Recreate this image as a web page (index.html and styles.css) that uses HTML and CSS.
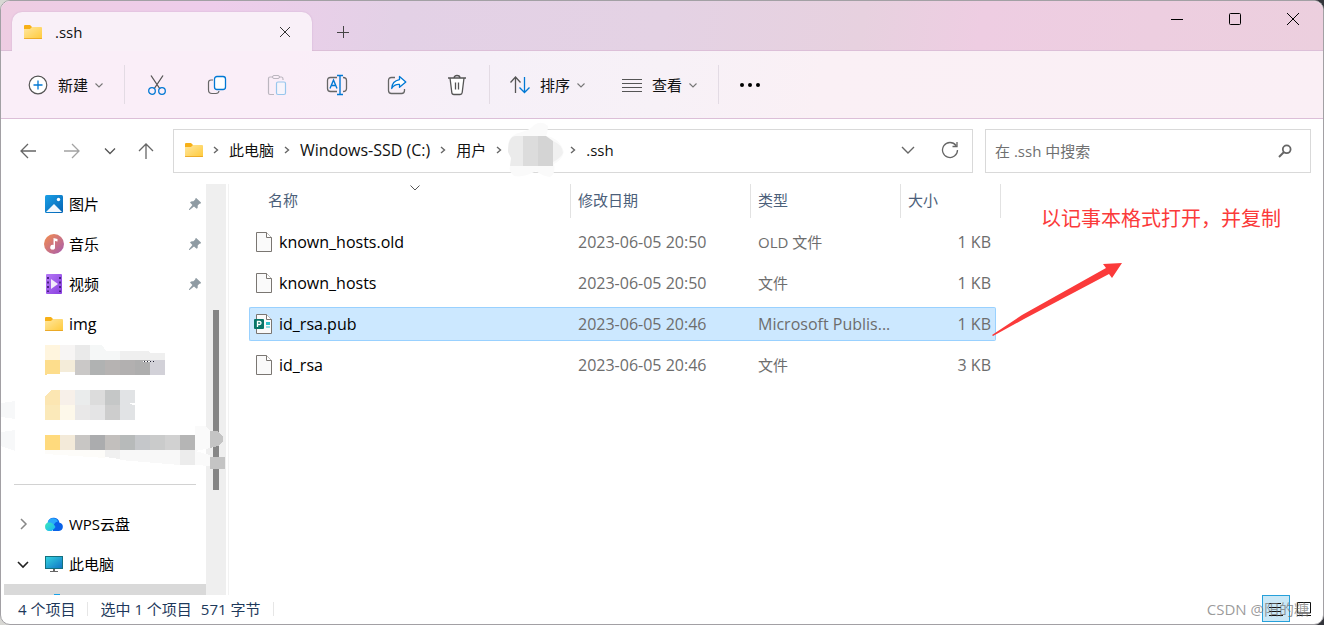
FILE: index.html
```html
<!DOCTYPE html>
<html lang="zh-CN">
<head>
<meta charset="utf-8">
<title>.ssh</title>
<link rel="stylesheet" href="styles.css">
</head>
<body>
<svg class="defs" aria-hidden="true">
  <defs>
    <linearGradient id="gold" x1="0" y1="0" x2="1" y2="1"><stop offset="0" stop-color="#ffe7a0"/><stop offset="1" stop-color="#ffca3a"/></linearGradient>
    <linearGradient id="sky" x1="0" y1="0" x2="1" y2="1"><stop offset="0" stop-color="#1ba0e6"/><stop offset="1" stop-color="#0463b4"/></linearGradient>
    <linearGradient id="sunset" x1="0" y1="0" x2="1" y2="1"><stop offset="0" stop-color="#f58e4c"/><stop offset="1" stop-color="#a65bb0"/></linearGradient>
    <linearGradient id="violet" x1="0" y1="0" x2="1" y2="1"><stop offset="0" stop-color="#b478f5"/><stop offset="1" stop-color="#8a3fe0"/></linearGradient>
    <linearGradient id="screen" x1="0" y1="0" x2="1" y2="1"><stop offset="0" stop-color="#35d6e0"/><stop offset="1" stop-color="#0f72c4"/></linearGradient>
    <linearGradient id="aqua" x1="0" y1="0" x2="1" y2="1"><stop offset="0" stop-color="#3ce8b8"/><stop offset="1" stop-color="#19b4fa"/></linearGradient>
    <symbol id="folder" viewBox="0 0 18 14"><path d="M0 1Q0 0 1 0H6L8 2V5H0Z" fill="#f7b017"/><path d="M0 4H6L8 2H17Q18 2 18 3V13Q18 14 17 14H1Q0 14 0 13Z" fill="url(#gold)"/><path d="M0 13.2H18V14H0Z" fill="#e79f1b"/></symbol>
    <symbol id="down" viewBox="0 0 10 10"><path d="M1.500 3.500L5 7L8.500 3.500" fill="none" stroke="#777" stroke-width="1.100"/></symbol>
    <symbol id="right" viewBox="0 0 8 10"><path d="M2 2L5.5 5L2 8" fill="none" stroke="#666" stroke-width="1.4"/></symbol>
    <symbol id="pin" viewBox="0 0 14 14"><path d="M8.2 1L13 5.6Q13 7 11.4 6.8L9.7 8.5Q10.2 11 8.6 11.8L6 9.6L1.6 13H1V12.2L4.4 8L2 5.4Q3 4 5.4 4.3L7.2 2.6Q7 1 8.2 1Z" fill="#8f9ba3"/></symbol>
    <symbol id="doc" viewBox="0 0 16 20"><path d="M.5 .5H10.5L15.5 5.5V19.5H.5Z" fill="#fafafa" stroke="#7a7672"/><path d="M10.5 .5V5.5H15.5" fill="#fff" stroke="#7a7672"/></symbol>
  </defs>
</svg>

<div class="window">
  <header class="titlebar">
    <div class="tab">
      <svg class="folder"><use href="#folder"/></svg>
      <span class="tab-name">.ssh</span>
      <button class="plain" aria-label="关闭标签页"><svg width="12" height="12"><path d="M1 1L11 11M11 1L1 11" stroke="#333" fill="none"/></svg></button>
    </div>
    <button class="plain new-tab" aria-label="新标签页"><svg width="12" height="12"><path d="M0 6.5H12M6.5 0V12" stroke="#444" fill="none"/></svg></button>
    <div class="controls">
      <button class="plain" aria-label="最小化"><svg width="12" height="12"><path d="M0 6.5H12" stroke="#000"/></svg></button>
      <button class="plain" aria-label="最大化"><svg width="12" height="12"><rect x=".5" y=".5" width="11" height="11" rx="1" fill="none" stroke="#000"/></svg></button>
      <button class="plain" aria-label="关闭"><svg width="12" height="12"><path d="M0 0L12 12M12 0L0 12" stroke="#000" fill="none"/></svg></button>
    </div>
  </header>

  <div class="toolbar">
    <button class="plain tool first"><svg width="20" height="20" fill="none"><circle cx="10" cy="10" r="8.8" stroke="#555" stroke-width="1.2" fill="#fff"/><path d="M10 5.5V14.5M5.5 10H14.5" stroke="#0078d4" stroke-width="1.3"/></svg>新建<svg class="chev"><use href="#down"/></svg></button>
    <span class="rule"></span>
    <button class="plain icon" aria-label="剪切"><svg width="20" height="22" fill="none"><path d="M4 1.5L13 15M16 1.5L7 15" stroke="#555" stroke-width="1.3"/><circle cx="5" cy="17" r="3.3" stroke="#0078d4" stroke-width="1.3"/><circle cx="15" cy="17" r="3.3" stroke="#0078d4" stroke-width="1.3"/></svg></button>
    <button class="plain icon" aria-label="复制"><svg width="20" height="20" fill="none"><path d="M6 5H4Q1.5 5 1.5 7.500V15Q1.500 18.500 5 18.500H9Q11.500 18.500 12 16" stroke="#666" stroke-width="1.2"/><rect x="7.500" y="1.500" width="11" height="13" rx="2.500" fill="#fff" stroke="#0078d4" stroke-width="1.3"/></svg></button>
    <button class="plain icon" aria-label="粘贴"><svg width="20" height="22" fill="none"><path d="M6 3H3Q1.500 3 1.500 4.500V19Q1.500 20.500 3 20.500H7M12 3H14.500Q16 3 16 5V6" stroke="#bbb6bf" stroke-width="1.2"/><rect x="5.500" y="1.500" width="7" height="3" rx="1.500" stroke="#bbb6bf"/><rect x="9.500" y="8" width="9" height="12.500" rx="1.500" fill="#f7f4fb" stroke="#98c6ed" stroke-width="1.2"/></svg></button>
    <button class="plain icon" aria-label="重命名"><svg width="22" height="22" fill="none"><path d="M11 3.500H4.500Q1.500 3.500 1.500 6.500V14.500Q1.500 17.500 4.500 17.500H11M17 3.500Q20.500 3.500 20.500 6.500V14.500Q20.500 17.500 17 17.500" stroke="#666" stroke-width="1.3"/><path d="M14 1.500V20.500M11 1.500H17M11 20.500H17M4 14.500L7.500 6L11 14.500M5.300 11.500H9.700" stroke="#0078d4" stroke-width="1.4"/></svg></button>
    <button class="plain icon" aria-label="共享"><svg width="20" height="20" fill="none"><path d="M8 2.500H4.500Q1.500 2.500 1.500 5.500V15.500Q1.500 18.500 4.500 18.500H14.500Q17.500 18.500 17.500 15.500V14" stroke="#666" stroke-width="1.3"/><path d="M12.500 1.500L18.800 7L12.500 12.300V9.500Q7.500 9 4.700 13.500Q5 6 12.500 4.600Z" fill="#fff" stroke="#0078d4" stroke-width="1.3" stroke-linejoin="round"/></svg></button>
    <button class="plain icon" aria-label="删除"><svg width="20" height="22" fill="none"><path d="M3 4L4.800 18.500Q5 20.500 7 20.500H13Q15 20.500 15.200 18.500L17 4" fill="#fff" stroke="#555" stroke-width="1.3"/><path d="M1 4H19M7 4Q7 1.500 10 1.500T13 4M8.500 8.500V15.500M11.500 8.500V15.500" stroke="#555" stroke-width="1.3"/></svg></button>
    <span class="rule"></span>
    <button class="plain tool"><svg width="20" height="20" fill="none"><path d="M5.500 18V2.500M.500 7.500L5.500 2L10.500 7.500" stroke="#555" stroke-width="1.3"/><path d="M14.500 2V17M9.500 12.500L14.500 17.500L19.500 12.500" stroke="#0078d4" stroke-width="1.3"/></svg>排序<svg class="chev"><use href="#down"/></svg></button>
    <button class="plain tool"><svg width="20" height="20" fill="none"><path d="M0 4.500H20M0 8.500H20M0 12.500H20M0 16.500H20" stroke="#555"/></svg>查看<svg class="chev"><use href="#down"/></svg></button>
    <span class="rule"></span>
    <button class="plain tool" aria-label="更多"><svg width="22" height="6"><circle cx="3" cy="3" r="2"/><circle cx="11" cy="3" r="2"/><circle cx="19" cy="3" r="2"/></svg></button>
  </div>

  <div class="location">
    <div class="history">
      <button class="plain wide" aria-label="后退"><svg width="16" height="16" fill="none"><path d="M16 8H1M8 1L1 8L8 15" stroke="#666" stroke-width="1.3"/></svg></button>
      <button class="plain wide" aria-label="前进"><svg width="16" height="16" fill="none"><path d="M0 8H15M8 1L15 8L8 15" stroke="#a3a3a3" stroke-width="1.3"/></svg></button>
      <button class="plain small" aria-label="最近位置"><svg width="12" height="12" fill="none"><path d="M1 3.500L6 8.500L11 3.500" stroke="#555" stroke-width="1.3"/></svg></button>
      <button class="plain up" aria-label="向上"><svg width="16" height="16" fill="none"><path d="M8 16V1M1 8L8 1L15 8" stroke="#666" stroke-width="1.3"/></svg></button>
    </div>
    <div class="address">
      <svg class="folder"><use href="#folder"/></svg>
      <svg class="sep"><use href="#right"/></svg>
      <a href="#pc">此电脑</a>
      <svg class="sep"><use href="#right"/></svg>
      <a href="#c" class="latin">Windows-SSD (C:)</a>
      <svg class="sep"><use href="#right"/></svg>
      <a href="#users">用户</a>
      <svg class="sep"><use href="#right"/></svg>
      <svg class="masked" width="56" height="56" aria-hidden="true"><path d="M0 22Q2 12 14 10Q22 8 26 3Q34-2 40 4Q40 10 38 14Q52 16 56 30Q54 38 46 42Q48 52 42 55Q34 54 28 49Q16 56 6 54Q-1 48 3 42Q6 34 0 30Z" fill="#fafafa"/><path d="M0 30Q0 14 8 14H15V44H2L3 36Z" fill="#ebebeb"/><path d="M15 14H30V44H15Z" fill="#dcdcdc"/><path d="M30 14H38L45 19V44H30Z" fill="#d4d4d4"/><path d="M45 19Q55 23 55 31Q53 36 45 40Z" fill="#f0f0f0"/></svg>
      <svg class="sep"><use href="#right"/></svg>
      <a href="#ssh">.ssh</a>
      <span class="address-end">
        <button class="plain" aria-label="展开地址"><svg width="14" height="14" fill="none"><path d="M1 4L7 10L13 4" stroke="#666" stroke-width="1.4"/></svg></button>
        <button class="plain" aria-label="刷新"><svg width="18" height="18" fill="none"><path d="M15 4.500A7.500 7.500 0 1 0 16.500 9M16 1V5.500H11.500" stroke="#666" stroke-width="1.3"/></svg></button>
      </span>
    </div>
    <label class="search">
      <input type="text" placeholder="在 .ssh 中搜索" aria-label="搜索">
      <svg width="14" height="14" fill="none"><circle cx="8.700" cy="5.300" r="3.900" stroke="#666" stroke-width="1.800"/><path d="M6 8L1 13" stroke="#666" stroke-width="2"/></svg>
    </label>
  </div>

  <div class="content">
    <aside class="pane">
      <nav class="tree">
        <a href="#pictures" class="node"><span class="glyph"><svg width="18" height="18"><rect width="18" height="18" rx="1.500" fill="url(#sky)"/><path d="M1 17L9 9L17 17Z" fill="#f2f8fd"/><circle cx="13.500" cy="4.500" r="1.700" fill="#fff"/></svg></span>图片<svg class="pin"><use href="#pin"/></svg></a>
        <a href="#music" class="node"><span class="glyph"><svg width="20" height="20"><circle cx="10" cy="10" r="10" fill="url(#sunset)"/><path d="M9.500 4L13.500 5V7.500L11 7V13A2.400 2.400 0 1 1 9.500 11Z" fill="#fff"/></svg></span>音乐<svg class="pin"><use href="#pin"/></svg></a>
        <a href="#videos" class="node"><span class="glyph"><svg width="16" height="20"><rect width="16" height="20" rx="1" fill="url(#violet)"/><path d="M2 3V18M14 3V18" stroke="#4a2384" stroke-width="2" stroke-dasharray="2 2.500"/><path d="M5 5L12 10L5 15Z" fill="#f2eafa"/></svg></span>视频<svg class="pin"><use href="#pin"/></svg></a>
        <a href="#img" class="node latin"><span class="glyph"><svg class="folder"><use href="#folder"/></svg></span>img</a>
        <svg class="mosaic" width="227" height="120" aria-hidden="true" shape-rendering="crispEdges">
          <path d="M44 1H59V16H44Z" fill="#fff5de"/>
          <path d="M59 1H74V16H59Z" fill="#f7f5f4"/><path d="M74 1H89V16H74Z" fill="#eaeaea"/><path d="M89 1H101L105 7H119V16H89Z" fill="#f5f7f7"/><path d="M119 7H147L149 9H164V16H119Z" fill="#efefef"/>
          <path d="M44 16H59V30H48L44 31Z" fill="#fddd8c"/><path d="M59 16H74V28H59Z" fill="#f4ecd9"/><path d="M74 16H89V31H74Z" fill="#cac8c7"/><path d="M89 16H104V31H89Z" fill="#b0b2b2"/><path d="M104 16H119V31H104Z" fill="#b6b3b2"/><path d="M119 16H134V31H119Z" fill="#b2b0b0"/><path d="M134 16H149V31H134Z" fill="#aeaeae"/><path d="M149 16H164V31H149Z" fill="#d2d1d8"/>
          <path d="M142 17.500H149" stroke="#fff"/><path d="M143 17.500H155" stroke="#223" stroke-dasharray="1 2"/>
          <path d="M44 53L50 46H59V61H44Z" fill="#fce6b2"/><path d="M59 46H74V61H59Z" fill="#f7f0e9"/><path d="M74 46H89V61H74Z" fill="#eaecec"/><path d="M89 46H104V61H89Z" fill="#dcdcdc"/><path d="M104 46H119V61H104Z" fill="#c5c7c7"/><path d="M119 46H134V59H128L132 61H134V76H119Z" fill="#e1e3e5"/>
          <path d="M44 61H59V76H44Z" fill="#fbe9b9"/><path d="M59 61H74V76H59Z" fill="#fdf8ea"/><path d="M74 61H89V76H74Z" fill="#e9e8e8"/><path d="M89 61H104V76H89Z" fill="#e4e4e5"/><path d="M104 61H119V76H104Z" fill="#cdcdcd"/>
          <path d="M44 91H59V106H44Z" fill="#ffda7d"/><path d="M59 91H74V106H59Z" fill="#f3ead9"/><path d="M74 91H89V106H74Z" fill="#c8c6c4"/><path d="M89 91H104V106H89Z" fill="#abacae"/><path d="M104 91H119V106H104Z" fill="#c2bfbd"/><path d="M119 91H134V106H119Z" fill="#b7baba"/><path d="M134 91H149V106H134Z" fill="#c5c7ca"/><path d="M149 91H164V106H149Z" fill="#cacbcb"/><path d="M164 91H179V106H164Z" fill="#d1d1d1"/><path d="M179 91H194V106H179Z" fill="#b5b5b5"/>
          <path d="M44 106H104V114L44 110Z" fill="#fdfcf9"/><path d="M104 106H119V115L104 113Z" fill="#f0f0f0"/><path d="M119 106H179V121L119 116Z" fill="#f8f8f8"/><path d="M179 106H194V121H179Z" fill="#ececec"/>
          <path d="M194 82H205L209 87V104L194 107L209 111V122L194 121Z" fill="#fafafa"/><path d="M209 87H217L222 93V98L217 102L209 104Z" fill="#c4c4c4"/><path d="M209 113H224V125H209Z" fill="#c4c4c4"/>
          <path d="M0 59L14 57V75L0 73ZM0 88L14 86V107L0 102Z" fill="#f7f8f9"/>
        </svg>
        <hr class="divider">
        <a href="#wps" class="node"><svg class="expander" fill="none"><path d="M4 1L9 6L4 11" stroke="#888" stroke-width="1.500"/></svg><span class="glyph"><svg width="20" height="15"><path d="M9 14H15A4.200 4.200 0 0 0 15.500 5.700A6 6 0 0 0 4 4.500Z" fill="#0a62e8"/><path d="M3.500 6A5.500 5.500 0 0 1 14 4.500Q9 5 8 14H5Z" fill="#2aa8fb"/><path d="M4.500 5.500Q9 5 11.500 10Q9 14 5 14A4.300 4.300 0 0 1 4.500 5.500Z" fill="url(#aqua)"/></svg></span>WPS云盘</a>
        <a href="#pc" class="node"><svg class="expander" fill="none"><path d="M1 4L6 9L11 4" stroke="#222" stroke-width="1.600"/></svg><span class="glyph"><svg width="18" height="16"><rect x=".500" y=".500" width="17" height="12" fill="url(#screen)" stroke="#14707f"/><path d="M8 13H10V15H13V16H5V15H8Z" fill="#666"/></svg></span>此电脑</a>
        <a href="#drive" class="node current" aria-label="磁盘"><span class="glyph"><svg width="8" height="18"><path d="M1 0H7V18H1Z" fill="#18a2e8"/></svg></span></a>
      </nav>
      <div class="scroll"><div class="thumb"></div></div>
    </aside>

    <main class="files">
      <table>
        <colgroup><col class="c-name"><col class="c-date"><col class="c-type"><col class="c-size"><col></colgroup>
        <thead><tr><th class="sorted">名称<svg class="sort" width="10" height="6" fill="none"><path d="M.500 .500L5 5L9.500 .500" stroke="#555"/></svg></th><th>修改日期</th><th>类型</th><th class="head-size">大小</th><th class="end"></th></tr></thead>
        <tbody>
          <tr><td><span class="file"><svg class="doc"><use href="#doc"/></svg>known_hosts.old</span></td><td>2023-06-05 20:50</td><td class="cjk">OLD 文件</td><td>1 KB</td></tr>
          <tr><td><span class="file"><svg class="doc"><use href="#doc"/></svg>known_hosts</span></td><td>2023-06-05 20:50</td><td class="cjk">文件</td><td>1 KB</td></tr>
          <tr class="selected"><td><span class="file"><svg class="doc" viewBox="0 0 16 20"><use href="#doc" width="16" height="20"/><path d="M10 8H14V11H10ZM10 12.500H14V13.500H10Z" fill="#2ebfc8"/><rect x="-2" y="5" width="10" height="10" rx="1" fill="#077568"/><path d="M1.500 13V7.500H3.500Q5 7.500 5 9T3.500 10.500H1.500" fill="none" stroke="#fff" stroke-width="1.300"/></svg>id_rsa.pub</span></td><td>2023-06-05 20:46</td><td>Microsoft Publis...</td><td>1 KB</td></tr>
          <tr><td><span class="file"><svg class="doc"><use href="#doc"/></svg>id_rsa</span></td><td>2023-06-05 20:46</td><td class="cjk">文件</td><td>3 KB</td></tr>
        </tbody>
      </table>
      <p class="note">以记事本格式打开，并复制</p>
      <svg class="arrow" width="130" height="74"><path d="M0 72L30 52L114 5L111 1L130 0L120 15L117 11L32 56L1 73Z" fill="#fb3a3a"/></svg>
    </main>
  </div>

  <footer class="status">
    <span>4 个项目</span><span class="bar"></span><span>选中 1 个项目</span><span class="bytes">571 字节</span><span class="bar"></span>
    <div class="views">
      <button class="plain view on" aria-label="详细信息"><svg width="16" height="14"><path d="M1 1.500H13M1 5.500H13M1 9.500H13M1 13.500H15" stroke="#111" stroke-width="1.200"/></svg></button>
      <button class="plain view" aria-label="大图标"><svg width="14" height="14"><path d="M.500 .500H13.500V11H.500ZM0 13.500H14" fill="none" stroke="#111"/></svg></button>
    </div>
    <span class="watermark">CSDN @阳的糖</span>
  </footer>
</div>
</body>
</html>
```
FILE: styles.css
```css
* { box-sizing: border-box; }
body {
  margin: 0;
  background: linear-gradient(to right, #d8d8d4, #33343a);
  color: #111;
  font: 15px/20px "Open Sans", "Noto Sans CJK SC", sans-serif;
}
svg { display: block; flex: none; }
a { color: inherit; text-decoration: none; }
.defs { position: absolute; width: 0; height: 0; }
.plain {
  display: flex; align-items: center; justify-content: center;
  padding: 0; border: 0; background: none; color: inherit; font: inherit;
}
.latin { font-size: 16px; }
.folder { width: 18px; height: 14px; }

.window {
  display: flex; flex-direction: column;
  height: 100vh; overflow: hidden;
  border: 1px solid #a2a0a4; border-radius: 10px;
  background: #fff;
}

.titlebar {
  display: flex; align-items: flex-end;
  height: 50px; padding-left: 11px;
  border-bottom: 1px solid #dcbfd8;
  background: linear-gradient(100deg, #eecde2, #eecdeb 16%, #e3d1e6 30%, #e4d2e4 50%, #e7d1df 65%, #eecde2 74%, #eccfde);
}
.tab {
  display: flex; align-items: center;
  width: 300px; height: 39px; margin-bottom: -1px; padding: 0 21px 0 12px;
  border-radius: 10px 10px 0 0;
  background: #f9f0f8;
  box-shadow: 0 0 2px #cfaed0;
  clip-path: inset(-3px -3px 0);
}
.tab-name { flex: 1; padding-left: 13px; font-weight: 500; }
.new-tab { width: 62px; height: 36px; }
.controls { display: flex; align-self: flex-start; margin: 0 1px 0 auto; }
.controls .plain { width: 58px; height: 36px; }

.toolbar {
  display: flex; align-items: center;
  height: 68px;
  border-bottom: 1px solid #dcbfd8;
  background: linear-gradient(100deg, #faeef8, #faeef8 22%, #f6f0f8 36%, #f7f1f7 50%, #faf0f5 62%, #faeff5);
}
.tool { height: 40px; padding: 0 18px; gap: 10px; }
.first { padding-left: 27px; }
.chev { width: 10px; height: 10px; margin-left: -4px; }
.icon { width: 60px; height: 40px; }
.rule { width: 1px; height: 39px; margin: 0 2px; background: #e3dbe4; }

.location { display: flex; padding: 10px 12px 4px 0; }
.history { display: flex; align-items: center; width: 172px; padding-left: 5px; }
.wide { width: 44px; height: 36px; }
.small { width: 32px; height: 36px; }
.up { width: 40px; height: 36px; }
.address {
  display: flex; align-items: center; flex: 1;
  height: 44px; padding: 0 13px 2px 11px;
  border: 1px solid #d9d9d9;
  white-space: nowrap;
}
.sep { width: 8px; height: 10px; margin: 0 9px; }
.masked { margin: -6px -4px -6px 0; overflow: visible; }
.address > .sep:has(+ .masked) { margin-right: 5px; }
.address-end { display: flex; gap: 26px; margin-left: auto; }
.search {
  display: flex; align-items: center;
  flex: 0 1 326px; height: 44px; margin-left: 12px; padding: 0 18px 0 9px;
  border: 1px solid #d9d9d9;
}
.search input { flex: 1; min-width: 0; padding: 0; border: 0; outline: 0; background: none; font: inherit; }
.search input::placeholder { color: #707070; opacity: 1; }

.content { display: flex; flex: 1; min-height: 0; }
.pane {
  display: flex;
  width: 228px; margin-top: 7px; overflow: hidden;
  border-right: 1px solid #f2f2f2;
}
.tree { width: 205px; color: #000; }
.node { display: flex; align-items: center; position: relative; height: 40px; padding-left: 40px; }
.glyph { display: flex; justify-content: center; width: 26px; margin-right: 2px; }
.pin { width: 14px; height: 14px; margin: 0 4px 0 auto; }
.mosaic { position: relative; z-index: 1; overflow: visible; }
.divider { height: 1px; margin: 20px 10px 19px 13px; border: 0; background: #d2d2d2; }
.expander { position: absolute; left: 16px; width: 12px; height: 12px; }
.current { margin-left: 3px; background: #d9d9d9; align-items: flex-start; padding-top: 10px; }
.scroll { width: 20px; background: #efefef; }
.thumb { width: 6px; height: 180px; margin: 126px auto 0 7px; background: #868686; }

.files { position: relative; flex: 1; padding-left: 20px; }
table { table-layout: fixed; width: 752px; border-spacing: 0 7px; }
.c-name { width: 322px; }
.c-date { width: 180px; }
.c-type { width: 150px; }
.c-size { width: 95px; }
th {
  height: 34px; padding: 0 7px 2px;
  border-right: 1px solid #e2e2e2;
  color: #4c607a; font-weight: 400; text-align: left;
}
.head-size { border-right: 0; }
.end { padding: 0; }
.sorted { position: relative; padding-left: 19px; }
.sort { position: absolute; top: 1px; left: 50%; }
td {
  height: 34px; padding: 0 7px;
  border: 0 solid #99d1ff;
  color: #6d6d6d; font-size: 16px; white-space: nowrap;
}
.cjk { font-size: 15px; }
td:first-child { padding-left: 7px; color: #000; }
td:nth-child(4) { padding-right: 5px; text-align: right; }
.selected td { border-width: 1px 0; background: #cce8ff; }
.selected td:first-child { padding-left: 6px; border-left-width: 1px; border-radius: 2px 0 0 2px; }
.selected td:nth-child(4) { padding-right: 4px; border-right-width: 1px; border-radius: 0 2px 2px 0; }
.file { display: flex; align-items: center; gap: 7px; }
.doc { width: 16px; height: 20px; overflow: visible; }
.note { position: absolute; top: 30px; left: 812px; margin: 0; color: #fb3a3a; font-size: 20px; line-height: 24px; white-space: nowrap; }
.arrow { position: absolute; top: 86px; left: 763px; }

.status {
  display: flex; align-items: center; position: relative;
  height: 29px; padding: 0 5px 2px 17px;
  color: #1e395b;
}
.bar { width: 1px; height: 14px; margin: 0 12px; background: #e6e6e6; }
.bytes { margin-left: 9px; }
.views { display: flex; align-self: stretch; margin-left: auto; }
.view { width: 28px; }
.on { border: 1px solid #26a0da; background: #cbe8f6; }
.watermark { position: absolute; right: 14px; color: rgba(110, 110, 110, .7); font-size: 15px; }
```
